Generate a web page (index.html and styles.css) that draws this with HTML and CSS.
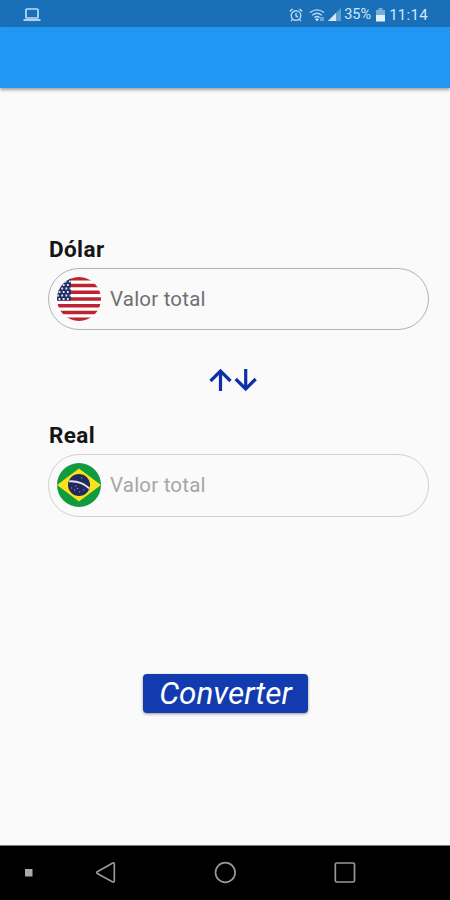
FILE: index.html
```html
<!DOCTYPE html>
<html lang="pt-BR">

<head>
    <meta charset="UTF-8">
    <meta name="viewport" content="width=device-width, initial-scale=1.0">
    <title>Conversor</title>
    <link rel="stylesheet" href="styles.css">
</head>

<body>
    <div class="screen">
        <div class="status-bar">
            <svg class="laptop" width="18" height="14" viewBox="0 0 18 14">
                <rect x="3" y="1" width="12" height="9" rx="1" fill="none" stroke="#b9dcf5" stroke-width="1.7" />
                <path d="M0.5 12h17" stroke="#b9dcf5" stroke-width="1.8" />
            </svg>
            <div class="status-icons">
                <svg class="alarm" width="14" height="14" viewBox="0 0 14 14" fill="none" stroke="#b9d9f0" stroke-width="1.4">
                    <circle cx="7" cy="7.6" r="4.8" />
                    <path d="M7 5v3l2 1M0.8 3.4L3.6 1M13.2 3.4L10.4 1M3.2 11.8L2 13M10.8 11.8L12 13" />
                </svg>
                <svg class="wifi" width="16" height="14" viewBox="0 0 16 14" fill="none" stroke="#b9d9f0" stroke-width="1.4">
                    <path d="M1 4.5Q8 -0.8 15 4.5M3.2 7.2Q8 3.2 12.8 7.2M5.4 9.6Q8 7.4 10.6 9.6" />
                    <path d="M8 10l1.8 1.6L8 13.2l-1.8-1.6z" fill="#d5e8f6" stroke="none" />
                    <path d="M12 9v4M14 9v4" stroke-width="1" />
                </svg>
                <svg class="signal" width="13" height="13" viewBox="0 0 13 13">
                    <path d="M13 0v13H0z" fill="#5f9fd0" />
                    <path d="M8 5v8H0z" fill="#d5e8f6" />
                </svg>
                <span class="percent">35%</span>
                <svg class="battery" width="9" height="14" viewBox="0 0 9 14">
                    <path d="M2.5 0h4v2H9v6H0V2h2.5z" fill="#77aed9" />
                    <path d="M0 7h9v6.5H0z" fill="#e4f0f9" />
                </svg>
                <span class="clock">11:14</span>
            </div>
        </div>

        <div class="app-bar"></div>

        <div class="content">
            <label class="label" for="dolar">Dólar</label>
            <div class="field">
                <svg class="flag" width="44" height="44" viewBox="0 0 44 44">
                    <clipPath id="round">
                        <circle cx="22" cy="22" r="22" />
                    </clipPath>
                    <g clip-path="url(#round)">
                        <rect width="44" height="44" fill="#fff" />
                        <path d="M0 1.7h44M0 8.5h44M0 15.2h44M0 22h44M0 28.8h44M0 35.5h44M0 42.3h44" stroke="#bd2331" stroke-width="3.4" />
                        <rect width="14" height="23.5" fill="#1e2f66" />
                        <path d="M1.5 8H14M0 11.5H14M1.5 15H14M0 18.5H14M1.5 22H14M3.5 4.5H14" stroke="#dce2ef" stroke-width="1.8" stroke-dasharray="1.9 2.3" />
                    </g>
                </svg>
                <input type="text" id="dolar" class="value" placeholder="Valor total">
            </div>

            <svg class="arrows" width="48" height="24" viewBox="0 0 48 24" fill="none" stroke="#0d2fa8" stroke-width="3.2">
                <path d="M11.5 23V3.5M1.5 13L11.5 3L21.5 13" />
                <path d="M36.7 1V20.5M26.7 11L36.7 21L46.7 11" />
            </svg>

            <label class="label" for="real">Real</label>
            <div class="field disabled">
                <svg class="flag" width="44" height="44" viewBox="0 0 44 44">
                    <g clip-path="url(#round)">
                        <rect width="44" height="44" fill="#109b40" />
                        <path d="M0 22L22 5.5L44 22L22 38.5z" fill="#fae119" />
                        <circle cx="22" cy="22" r="11" fill="#20285f" />
                        <path d="M12 18.3Q24 17.5 32.5 25.5" fill="none" stroke="#dfe5ee" stroke-width="1.8" />
                        <path d="M14 25h1.2M17 27h1.2M20 25.5h1.2M22 29h1.2M26 27h1.2M24 15h1.2M18 23h1.2" stroke="#8f98bd" stroke-width="1" />
                    </g>
                </svg>
                <input type="text" id="real" class="value" placeholder="Valor total" disabled>
            </div>

            <button class="convert">Converter</button>
        </div>

        <div class="nav-bar">
            <svg width="450" height="54" viewBox="0 0 450 54" fill="none" stroke="#989898" stroke-width="1.7">
                <rect x="25" y="23" width="7.5" height="7.5" fill="#aaa" stroke="none" />
                <path d="M97.3 25.7L112.3 17.2Q114.3 16.3 114.3 18.3V34.7Q114.3 36.7 112.3 35.7L97.3 27.5Q96 26.6 97.3 25.7z" />
                <circle cx="225.3" cy="26.5" r="9.8" />
                <rect x="335.3" y="17" width="19.2" height="19" rx="1.5" />
            </svg>
        </div>
    </div>
</body>

</html>
```

FILE: styles.css
```css
body {
    margin: 0;
    font-family: Roboto, "Liberation Sans", sans-serif;
    background-color: #fafafa;
}

.screen {
    display: flex;
    flex-direction: column;
    height: 900px;
    width: 450px;
    overflow: hidden;
}

.status-bar {
    display: flex;
    justify-content: space-between;
    align-items: center;
    height: 27px;
    padding: 2px 22px 0 23px;
    box-sizing: border-box;
    background-color: #1a70b8;
    color: #d3e7f6;
}

.status-icons {
    display: flex;
    align-items: center;
    font-size: 14.5px;
    line-height: 16px;
}

.wifi {
    margin-left: 6px;
}

.signal {
    margin-left: 3px;
}

.percent {
    margin-left: 3px;
}

.battery {
    margin-left: 5px;
}

.clock {
    margin-left: 4px;
    font-size: 15px;
    letter-spacing: 0.3px;
}

.app-bar {
    height: 61px;
    background-color: #2196f3;
    box-shadow: 0 2px 3px rgba(0, 0, 0, 0.35);
}

.content {
    flex: 1;
    display: flex;
    flex-direction: column;
    padding: 147px 21px 0 48px;
}

.label {
    height: 28px;
    padding-left: 1px;
    margin-bottom: 5px;
    font-size: 22.5px;
    font-weight: bold;
    line-height: 29px;
    letter-spacing: 0.4px;
    color: #151515;
}

.field {
    display: flex;
    align-items: center;
    height: 62px;
    padding-left: 8px;
    box-sizing: border-box;
    border: 1px solid #b2b2b2;
    border-radius: 31px;
}

.field.disabled {
    height: 63px;
    padding-bottom: 1px;
    border-color: #d0d0d0;
}

.flag {
    flex: none;
}

.value {
    flex: 1;
    min-width: 0;
    margin-left: 9px;
    margin-right: 20px;
    padding: 0;
    border: none;
    outline: none;
    background: none;
    font-family: inherit;
    font-size: 20.5px;
    letter-spacing: 0.2px;
}

.value::placeholder {
    color: #707070;
    opacity: 1;
}

.disabled .value::placeholder {
    color: #a6a6a6;
}

.arrows {
    align-self: center;
    margin: 38px 12px 29px 0;
}

.convert {
    align-self: center;
    width: 165px;
    height: 39px;
    margin-top: 157px;
    margin-right: 26px;
    padding: 0;
    border: none;
    border-radius: 4px;
    background-color: #123bb0;
    box-shadow: 0 1px 3px rgba(0, 0, 0, 0.4);
    color: #fff;
    font-family: inherit;
    font-size: 31.5px;
    font-style: italic;
    line-height: 39px;
}

.nav-bar {
    height: 54px;
    border-top: 1px solid #777;
    background-color: #000;
}
```
